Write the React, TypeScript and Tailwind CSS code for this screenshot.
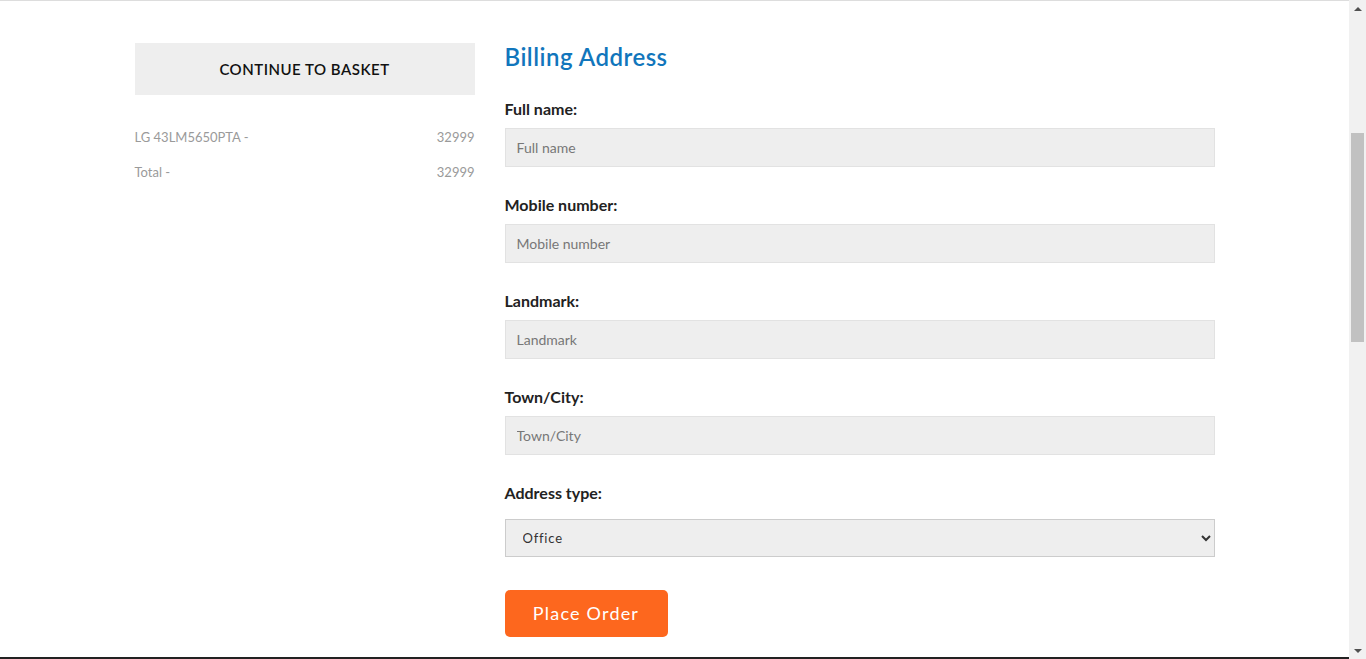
import React, { useState } from 'react';

const fields = [
    { label: 'Full name:', placeholder: 'Full name' },
    { label: 'Mobile number:', placeholder: 'Mobile number' },
    { label: 'Landmark:', placeholder: 'Landmark' },
    { label: 'Town/City:', placeholder: 'Town/City' },
];

const basket = [{ name: 'LG 43LM5650PTA', price: 32999 }];

// classic window scrollbar, as seen at the right edge of the page
const Scrollbar: React.FC = () => (
    <div className="flex w-[17px] shrink-0 flex-col bg-[#f1f1f1]">
        <div className="flex h-[17px] items-center justify-center">
            <svg width="8" height="4" viewBox="0 0 8 4">
                <path d="M0 4 L4 0 L8 4 Z" fill="#505050" />
            </svg>
        </div>
        <div className="flex-1 px-[2px] pt-[116px]">
            <div className="h-[209px] bg-[#c1c1c1]" />
        </div>
        <div className="flex h-[17px] items-center justify-center">
            <svg width="8" height="4" viewBox="0 0 8 4">
                <path d="M0 0 L8 0 L4 4 Z" fill="#505050" />
            </svg>
        </div>
    </div>
);

const App: React.FC = () => {
    const [addressType, setAddressType] = useState('Office');
    const total = basket.reduce((sum, item) => sum + item.price, 0);

    return (
        <div className="flex h-screen bg-white font-['Lato','Liberation_Sans',sans-serif]">
            <div className="flex-1 overflow-hidden">
                <main className="border-t border-[#dddddd]">
                    <div className="mx-auto flex w-[1080px] gap-[30px] pt-[42px] pb-[20px]">
                        {/* order summary */}
                        <div className="w-[340px] shrink-0">
                            <button className="flex h-[52px] w-full items-center justify-center bg-[#eeeeee] text-[15px] font-semibold tracking-[0.5px] text-[#111111] uppercase">
                                Continue to basket
                            </button>
                            <ul className="mt-[32px] flex flex-col gap-[15px] text-[13px] leading-[20px] text-[#9a9a9a]">
                                {basket.map((item) => (
                                    <li key={item.name} className="flex justify-between">
                                        <span>{item.name} -</span>
                                        <span>{item.price}</span>
                                    </li>
                                ))}
                                <li className="flex justify-between">
                                    <span>Total -</span>
                                    <span>{total}</span>
                                </li>
                            </ul>
                        </div>

                        {/* billing form */}
                        <div className="w-[710px] shrink-0">
                            <h2 className="text-[24px] leading-[28px] font-semibold tracking-[0.5px] text-[#1176bc]">
                                Billing Address
                            </h2>
                            <form className="mt-[27px]" onSubmit={(e) => e.preventDefault()}>
                                {fields.map((f) => (
                                    <div key={f.label} className="mb-[27px]">
                                        <label className="block text-[16px] leading-[22px] font-bold text-[#222222]">
                                            {f.label}
                                        </label>
                                        <input
                                            type="text"
                                            placeholder={f.placeholder}
                                            className="mt-[8px] block h-[39px] w-full border border-[#e2e2e2] bg-[#eeeeee] px-[11px] text-[14px] text-[#333333] placeholder:text-[#777777] outline-none"
                                        />
                                    </div>
                                ))}
                                <div>
                                    <label className="block text-[16px] leading-[22px] font-bold text-[#222222]">
                                        Address type:
                                    </label>
                                    <select
                                        value={addressType}
                                        onChange={(e) => setAddressType(e.target.value)}
                                        className="mt-[15px] block h-[38px] w-full border border-[#cccccc] bg-[#eeeeee] pl-[13px] pr-[8px] text-[13px] tracking-[0.8px] text-[#333333]"
                                    >
                                        <option>Office</option>
                                        <option>Home</option>
                                    </select>
                                </div>
                                <button
                                    type="submit"
                                    className="mt-[33px] flex h-[47px] w-[163px] items-center justify-center rounded-[5px] bg-[#fd671e] text-[18px] tracking-[1.2px] text-white"
                                >
                                    Place Order
                                </button>
                            </form>
                        </div>
                    </div>
                </main>
                <footer className="h-[320px] border-t-2 border-[#222222] bg-[#2b2b2b]" />
            </div>
            <Scrollbar />
        </div>
    );
};

export default App;
